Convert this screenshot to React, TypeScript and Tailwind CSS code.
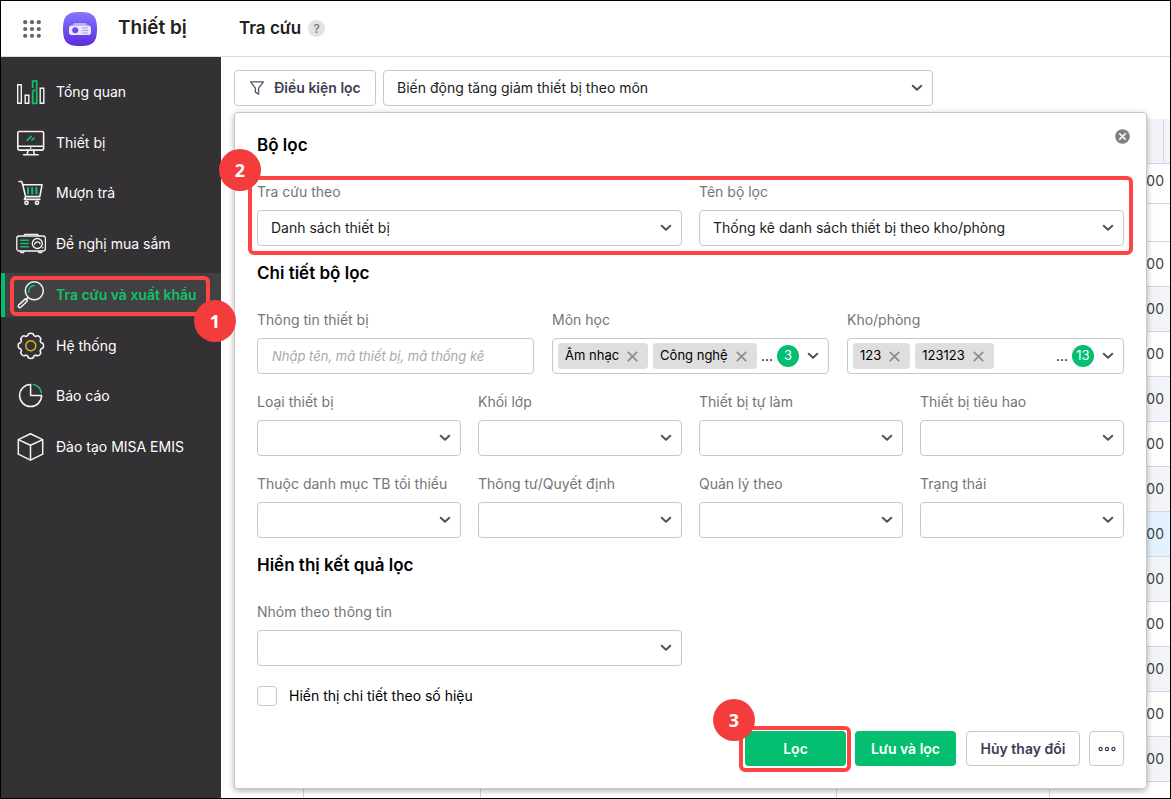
import { useState, type ReactNode } from "react";

const GREEN = "#11c06d";

function ChartIcon() {
  return (
    <svg viewBox="0 0 30 30" fill="none" strokeWidth="1.4" className="h-[30px] w-[30px]">
      <path className="stroke-gray-100" d="M1.7 7.7h3.6v18.6H1.7zM9.2 18.2h3.6v8.1H9.2zM24.2 11.2h3.6v15.1h-3.6z" />
      <path stroke={GREEN} strokeWidth="1.8" d="M16.7 11V4.2h4v22.1h-4V14.5l2-2" />
    </svg>
  );
}

function MonitorIcon() {
  return (
    <svg viewBox="0 0 30 30" fill="none" strokeWidth="1.6" strokeLinejoin="round" strokeLinecap="round" className="h-[30px] w-[30px]">
      <rect x="1.8" y="3.5" width="25.8" height="18.6" rx="1.5" className="stroke-gray-100" />
      <path className="stroke-gray-100" d="M2 18.3h25.4M12 22.2l-.7 4M17.6 22.2l.7 4M7.5 26.8h14.6M14.7 20.1v.2" />
      <path stroke={GREEN} d="M11 12.3l4.2-4M15.8 12.2l2.2-2.1" />
    </svg>
  );
}

function CartIcon() {
  return (
    <svg viewBox="0 0 30 30" fill="none" strokeWidth="1.6" strokeLinejoin="round" strokeLinecap="round" className="h-[30px] w-[30px]">
      <path className="stroke-gray-100" d="M3 3.5h2.6l1 2.6 3 12.5h14.2L26 6.8H6.8M9.6 18.6l-1.2 2.8h15.5" />
      <circle cx="10.5" cy="24.8" r="1.6" className="stroke-gray-100" />
      <circle cx="21" cy="24.8" r="1.6" className="stroke-gray-100" />
      <path stroke={GREEN} strokeWidth="2" d="M12 10v5.4M16.2 10v5.4M20.4 10v5.4" />
    </svg>
  );
}

function ProjectorIcon() {
  return (
    <svg viewBox="0 0 30 30" fill="none" strokeWidth="1.3" strokeLinecap="round" className="h-[30px] w-[30px]">
      <rect x=".8" y="7" width="28.6" height="15" rx="2.2" className="stroke-gray-100" />
      <path className="stroke-gray-100" d="M8 6.7l1-1.4h12.5l1 1.4M4.5 22.4l.5 1.3h2.5l.5-1.3M22.5 22.4l.5 1.3h2.5l.5-1.3M18.6 15.4a2.8 2.8 0 0 1 5.4-.6" />
      <circle cx="21.3" cy="14.5" r="5" className="stroke-gray-100" />
      <path className="stroke-gray-100" d="M26.8 18.7v.2" />
      <path stroke={GREEN} strokeWidth="1.5" d="M4.7 11.3h7.6M4.7 14.5h7.6M4.7 17.7h7.6" />
    </svg>
  );
}

function SearchIcon() {
  return (
    <svg viewBox="0 0 30 30" fill="none" strokeWidth="1.5" strokeLinecap="round" strokeLinejoin="round" className="h-[30px] w-[30px]">
      <circle cx="18.3" cy="10.8" r="9" className="stroke-gray-100" />
      <path className="stroke-gray-100" d="M12.3 17.6l-2.2 2.2M9.3 18.9l2.1 2.1-6.6 6.3c-1.4 1.2-3.4-.7-2.2-2.2z" />
      <path stroke={GREEN} d="M12.8 12.3c-.6-4 2-6.7 5.4-6.7" />
    </svg>
  );
}

function GearIcon() {
  return (
    <svg viewBox="0 0 30 30" fill="none" strokeWidth="1.5" strokeLinejoin="round" className="h-[30px] w-[30px]">
      <path
        className="stroke-gray-100"
        d="M11.8 4.6C11.8 1.4 17.8 1.4 17.8 4.6L19.9 5.5C22.2 3.3 26.3 7.4 24.1 9.7L25 11.8C28.4 11.8 28.4 17.8 25 17.8L24.1 19.9C26.3 22.2 22.2 26.3 19.9 24.1L17.8 25C17.8 28.4 11.8 28.4 11.8 25L9.7 24.1C7.4 26.3 3.3 22.2 5.5 19.9L4.6 17.8C1.4 17.8 1.4 11.8 4.6 11.8L5.5 9.7C3.3 7.4 7.4 3.3 9.7 5.5Z"
      />
      <circle cx="14.8" cy="14.8" r="5" stroke="#e2b714" />
    </svg>
  );
}

function PieIcon() {
  return (
    <svg viewBox="0 0 30 30" fill="none" strokeWidth="1.5" strokeLinejoin="round" className="h-[30px] w-[30px]">
      <path className="stroke-gray-100" d="M14.6 3.6a11 11 0 1 0 11 11h-11z" />
      <path stroke={GREEN} d="M17.4 3.6a11 11 0 0 1 8.2 8.4" strokeLinecap="round" />
    </svg>
  );
}

function BoxIcon() {
  return (
    <svg viewBox="0 0 30 30" fill="none" strokeWidth="1.5" strokeLinejoin="round" className="h-[30px] w-[30px]">
      <path className="stroke-gray-100" d="M14.5 1.8l12.2 5.8v14.6l-12.2 6-12.2-6V7.6zM2.3 7.6l12.2 5.7 12.2-5.7M14.5 13.3v14.9" />
    </svg>
  );
}

function AppLogo() {
  return (
    <svg viewBox="0 0 34 34" className="h-[34px] w-[34px]">
      <defs>
        <linearGradient id="logo" x1="0" y1="0" x2="0" y2="1">
          <stop offset="0" stopColor="#8477fb" />
          <stop offset="1" stopColor="#5b2be0" />
        </linearGradient>
      </defs>
      <path fill="url(#logo)" d="M17 0C29 0 34 3 34 17S29 34 17 34 0 31 0 17 5 0 17 0Z" />
      <path fill="#b9b0fb" d="M9.5 13.5l1.5-2.5h12l1.5 2.5z" />
      <rect x="6" y="13.5" width="22" height="9.5" rx="2.5" fill="#e9e5fe" />
      <circle cx="12.2" cy="18.2" r="3" fill="#6d46ea" />
      <path stroke="#a79bf5" d="M19 16h6M19 18.5h6M19 21h6" />
    </svg>
  );
}

function GridIcon() {
  return (
    <svg viewBox="0 0 18 18" className="h-[18px] w-[18px]" fill="#666">
      {[2.2, 9, 15.8].map((y) => [2.2, 9, 15.8].map((x) => <circle key={`${x}-${y}`} cx={x} cy={y} r="2.1" />))}
    </svg>
  );
}

function FilterIcon() {
  return (
    <svg viewBox="0 0 16 16" fill="none" className="h-4 w-4">
      <path className="stroke-[#55556a]" strokeWidth="1.3" strokeLinejoin="round" d="M1.6 1.9h12.8L9.6 8.2v6L6.4 12.1V8.2z" />
    </svg>
  );
}

function Chevron(props: { className?: string }) {
  return (
    <svg viewBox="0 0 12 8" fill="none" className={props.className ?? "h-2 w-3"}>
      <path className="stroke-[#555168]" strokeWidth="2" strokeLinecap="round" strokeLinejoin="round" d="M1.7 1.8L6 5.8l4.3-4" />
    </svg>
  );
}

function Select(props: { id: string; options?: string[]; title?: string }) {
  return (
    <div className="relative">
      <select
        id={props.id}
        aria-label={props.title}
        className="block h-9 w-full appearance-none rounded border border-[#c8c8c8] bg-white pl-[13px] pr-8 text-sm text-[#212121] outline-none focus:border-[#04bf70]"
      >
        {(props.options ?? [""]).map((o) => (
          <option key={o}>{o}</option>
        ))}
      </select>
      <Chevron className="pointer-events-none absolute right-[10px] top-[14px] h-2 w-3" />
    </div>
  );
}

function Field(props: { id: string; label: string; children: ReactNode }) {
  return (
    <div className="min-w-0">
      <label htmlFor={props.id} className="mb-2 block text-sm leading-5 text-[#757575]">
        {props.label}
      </label>
      {props.children}
    </div>
  );
}

function TagBox(props: { id: string; tags: string[]; count: number }) {
  const [tags, setTags] = useState(props.tags);
  return (
    <div className="flex h-9 items-center rounded border border-[#c8c8c8] bg-white pl-[5px] pr-[9px]">
      <div className="flex gap-[5px] whitespace-nowrap">
        {tags.map((t) => (
          <span key={t} className="flex h-[26px] items-center gap-2 rounded bg-[#dedede] pl-[7px] pr-[10px] text-[13px] text-black">
            {t}
            <button type="button" aria-label={`Xóa ${t}`} onClick={() => setTags(tags.filter((x) => x !== t))}>
              <svg viewBox="0 0 11 11" className="h-[11px] w-[11px]">
                <path className="stroke-[#8f8f8f]" strokeWidth="1.8" d="M.8.8l9.4 9.4M10.2.8L.8 10.2" />
              </svg>
            </button>
          </span>
        ))}
      </div>
      <span className="ml-auto text-sm text-black">...</span>
      <span className="ml-1 flex h-[22px] w-[22px] shrink-0 items-center justify-center rounded-full bg-[#04bf70] text-[13px] text-white">
        {props.count}
      </span>
      <button type="button" id={props.id} className="ml-2">
        <Chevron />
      </button>
    </div>
  );
}

function StepBadge(props: { step: number; className: string }) {
  return (
    <span
      className={`absolute z-20 flex h-[42px] w-[42px] items-center justify-center rounded-full bg-[#f43c3c] font-['Open_Sans',sans-serif] text-lg font-bold text-white ${props.className}`}
    >
      {props.step}
    </span>
  );
}

const NAV = [
  { label: "Tổng quan", icon: <ChartIcon /> },
  { label: "Thiết bị", icon: <MonitorIcon /> },
  { label: "Mượn trả", icon: <CartIcon /> },
  { label: "Đề nghị mua sắm", icon: <ProjectorIcon /> },
  { label: "Tra cứu và xuất khẩu", icon: <SearchIcon />, active: true },
  { label: "Hệ thống", icon: <GearIcon /> },
  { label: "Báo cáo", icon: <PieIcon /> },
  { label: "Đào tạo MISA EMIS", icon: <BoxIcon /> },
];

const ROWS = [
  "bg-white",
  "bg-[#f3f4f9]",
  "bg-white",
  "bg-[#f3f4f9]",
  "bg-white",
  "bg-[#f3f4f9]",
  "bg-[#e3f2fe]",
  "bg-[#f3f4f9]",
  "bg-white",
  "bg-[#f3f4f9]",
  "bg-white",
  "bg-[#f3f4f9]",
];

function ResultTable() {
  const cell = "border-b border-r border-[#d3d4e6]";
  return (
    <div className="pl-[13px]">
      <table className="mt-[13px] w-full table-fixed border-separate border-spacing-0 text-sm text-[#424242]">
        <colgroup>
          <col className="w-[70px]" />
          <col className="w-[177px]" />
          <col className="w-[356px]" />
          <col className="w-[213px]" />
          <col />
          <col className="w-[6px]" />
        </colgroup>
        <thead>
          <tr className="h-[45px] bg-[#f3f4f9]">
            {[0, 1, 2, 3, 4].map((c) => (
              <th key={c} className={cell} />
            ))}
            <th className="border-b border-[#d3d4e6]" />
          </tr>
        </thead>
        <tbody>
          <tr className="h-10">
            <td colSpan={4} className="border-b border-[#d3d4e6]" />
            <td colSpan={2} className="border-b border-[#d3d4e6] pb-[6px] pr-[6px] text-right">00</td>
          </tr>
          <tr className="h-[38px]">
            <td colSpan={6} className="border-b border-[#d3d4e6]" />
          </tr>
          {ROWS.map((bg, i) => (
            <tr key={i} className={`h-[45px] ${bg}`}>
              {[0, 1, 2, 3].map((c) => (
                <td key={c} className={cell} />
              ))}
              <td colSpan={2} className="border-b border-[#d3d4e6] pr-[6px] text-right">00</td>
            </tr>
          ))}
          <tr className="h-[45px]">
            {[0, 1, 2, 3].map((c) => (
              <td key={c} className={cell} />
            ))}
            <td colSpan={2} />
          </tr>
        </tbody>
      </table>
    </div>
  );
}

function FilterPanel() {
  const heading = "text-[17px] font-semibold leading-6 text-black";
  return (
    <form
      onSubmit={(e) => e.preventDefault()}
      className="absolute left-[13px] right-[23px] top-[55px] z-10 rounded border border-[#c8c8c8] bg-white px-[22px] pb-[22px] pt-5 shadow-[0_2px_6px_rgba(0,0,0,0.3)]"
    >
      <div className="flex items-start justify-between">
        <h2 className={heading}>Bộ lọc</h2>
        <button type="button" aria-label="Đóng" className="-mr-[6px] -mt-1">
          <svg viewBox="0 0 15 15" className="h-[15px] w-[15px]">
            <circle cx="7.5" cy="7.5" r="7.3" fill="#808080" />
            <path className="stroke-white" strokeWidth="1.6" d="M4.3 4.3l6.4 6.4M10.7 4.3l-6.4 6.4" />
          </svg>
        </button>
      </div>

      <div className="relative mt-[25px] grid grid-cols-2 gap-[17px]">
        <Field id="by" label="Tra cứu theo">
          <Select id="by" options={["Danh sách thiết bị"]} />
        </Field>
        <Field id="name" label="Tên bộ lọc">
          <Select id="name" options={["Thống kê danh sách thiết bị theo kho/phòng"]} />
        </Field>
        <span className="pointer-events-none absolute -bottom-[9px] -left-[9px] -right-[9px] -top-[6px] rounded-md border-4 border-[#ff4444]" />
        <StepBadge step={2} className="-left-[38px] -top-[33px]" />
      </div>

      <h2 className={`mt-[15px] ${heading}`}>Chi tiết bộ lọc</h2>
      <div className="mt-[25px] grid grid-cols-3 gap-[18px]">
        <Field id="info" label="Thông tin thiết bị">
          <input
            id="info"
            type="text"
            placeholder="Nhập tên, mã thiết bị, mã thống kê"
            className="block h-9 w-full rounded border border-[#c8c8c8] px-[14px] text-[13px] outline-none placeholder:italic placeholder:text-[#a8a8a8] focus:border-[#04bf70]"
          />
        </Field>
        <Field id="subject" label="Môn học">
          <TagBox id="subject" tags={["Âm nhạc", "Công nghệ"]} count={3} />
        </Field>
        <Field id="room" label="Kho/phòng">
          <TagBox id="room" tags={["123", "123123"]} count={13} />
        </Field>
      </div>
      <div className="mt-[18px] grid grid-cols-4 gap-x-[17px] gap-y-[18px]">
        {[
          "Loại thiết bị",
          "Khối lớp",
          "Thiết bị tự làm",
          "Thiết bị tiêu hao",
          "Thuộc danh mục TB tối thiểu",
          "Thông tư/Quyết định",
          "Quản lý theo",
          "Trạng thái",
        ].map((label, i) => (
          <Field key={label} id={`f${i}`} label={label}>
            <Select id={`f${i}`} />
          </Field>
        ))}
      </div>

      <h2 className={`mt-[15px] ${heading}`}>Hiển thị kết quả lọc</h2>
      <div className="mt-[25px] grid grid-cols-2 gap-[17px]">
        <Field id="group" label="Nhóm theo thông tin">
          <Select id="group" />
        </Field>
      </div>
      <div className="mt-5 flex items-center">
        <input id="detail" type="checkbox" className="h-5 w-5 appearance-none rounded border border-[#c8c8c8] checked:bg-[#04bf70]" />
        <label htmlFor="detail" className="pl-3 text-sm leading-5 text-black">
          Hiển thị chi tiết theo số hiệu
        </label>
      </div>

      <div className="mt-[25px] flex items-center justify-end text-sm font-semibold">
        <div className="relative mr-[9px]">
          <button type="submit" className="block h-[35px] w-[101px] rounded bg-[#04bf70] text-white">
            Lọc
          </button>
          <span className="pointer-events-none absolute -bottom-[6px] -left-[6px] -right-[5px] -top-[5px] rounded-md border-4 border-[#ff4444]" />
          <StepBadge step={3} className="-left-8 -top-8" />
        </div>
        <button type="button" className="mr-[10px] h-[35px] w-[101px] rounded bg-[#04bf70] text-white">
          Lưu và lọc
        </button>
        <button type="button" className="mr-[9px] h-[35px] w-[114px] rounded border border-[#c8c8c8] text-[#3b3c54]">
          Hủy thay đổi
        </button>
        <button type="button" aria-label="Khác" className="flex h-[35px] w-[35px] items-center justify-center rounded border border-[#c8c8c8]">
          <svg viewBox="0 0 18 6" fill="none" strokeWidth="1.2" className="h-[6px] w-[18px] stroke-[#3b3c54]">
            <circle cx="2.6" cy="3" r="1.6" />
            <circle cx="9" cy="3" r="1.6" />
            <circle cx="15.4" cy="3" r="1.6" />
          </svg>
        </button>
      </div>
    </form>
  );
}

export default function App() {
  return (
    <div className="flex h-screen flex-col overflow-hidden border border-black bg-white font-['Inter',sans-serif]">
      <header className="flex h-14 shrink-0 items-center border-b border-[#dcdcdc] pl-[22px]">
        <button type="button" aria-label="Ứng dụng">
          <GridIcon />
        </button>
        <span className="ml-[22px]">
          <AppLogo />
        </span>
        <span className="ml-[21px] w-[121px] text-[19px] font-semibold text-[#212121]">Thiết bị</span>
        <h1 className="text-[17px] font-semibold text-[#212121]">Tra cứu</h1>
        <button type="button" aria-label="Trợ giúp" className="ml-[7px] h-[17px] w-[17px] rounded-full bg-[#e2e2e2] text-xs font-medium text-[#757575]">
          ?
        </button>
      </header>

      <div className="flex min-h-0 flex-1">
        <nav className="w-[220px] shrink-0 bg-[#333134] pt-[13px]">
          <ul className="flex h-[399px] flex-col justify-between">
            {NAV.map((n) => (
              <li key={n.label} className="relative">
                <a
                  href="#"
                  className={
                    n.active
                      ? "flex h-11 items-center gap-[10px] border-l-4 border-[#04bf70] bg-[#424142] pl-[11px] text-sm font-semibold text-[#11c06d]"
                      : "flex h-11 items-center gap-[10px] pl-[15px] text-sm text-white"
                  }
                >
                  {n.icon}
                  {n.label}
                </a>
                {n.active && (
                  <>
                    <span className="pointer-events-none absolute bottom-[1px] left-[9px] right-[11px] top-[3px] rounded-md border-4 border-[#ff4444]" />
                    <StepBadge step={1} className="-right-[15px] top-[27px]" />
                  </>
                )}
              </li>
            ))}
          </ul>
        </nav>

        <main className="relative min-w-0 flex-1 pt-[13px]">
          <div className="flex gap-[7px] pl-[13px]">
            <button type="button" className="flex h-9 w-[142px] items-center justify-center gap-[9px] rounded border border-[#c8c8c8] text-sm font-semibold text-[#3b3c54]">
              <FilterIcon />
              Điều kiện lọc
            </button>
            <div className="w-[550px]">
              <Select id="report" title="Bộ lọc đã lưu" options={["Biến động tăng giảm thiết bị theo môn"]} />
            </div>
          </div>
          <ResultTable />
          <FilterPanel />
        </main>
      </div>
    </div>
  );
}
